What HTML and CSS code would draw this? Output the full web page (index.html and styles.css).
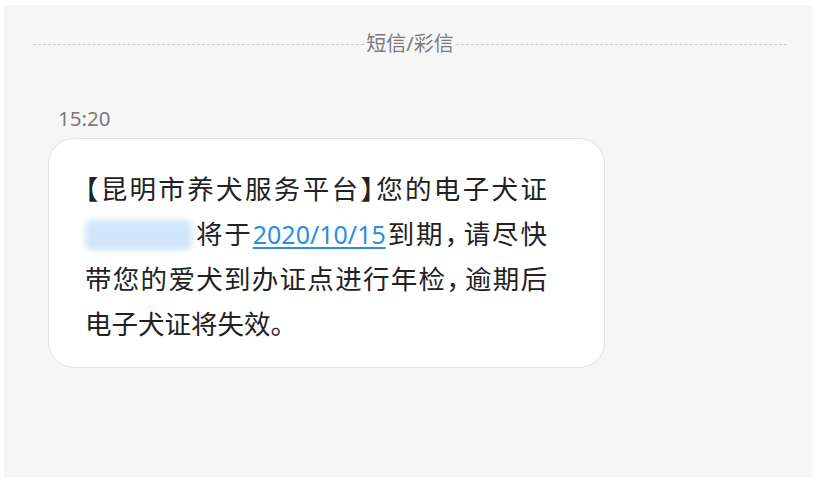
FILE: index.html
```html
<!DOCTYPE html>
<html lang="zh-CN">
<head>
    <meta charset="UTF-8">
    <title>短信/彩信</title>
    <link rel="stylesheet" href="styles.css">
</head>
<body>
    <div class="panel">
        <div class="divider">
            <span class="line"></span>
            <span class="divider-text">短信/彩信</span>
            <span class="line"></span>
        </div>
        <div class="time">15:20</div>
        <div class="bubble">
            <p class="msg">
                <span class="row"><span class="punct">【</span>昆明市养犬服务平台<span class="punct">】</span>您的电子犬证</span>
                <span class="row"><span class="blur"></span>将于<a href="#">2020/10/15</a>到期<span class="punct comma">，</span>请尽快</span>
                <span class="row">带您的爱犬到办证点进行年检<span class="punct comma">，</span>逾期后</span>
                <span class="row last">电子犬证将失效。</span>
            </p>
        </div>
    </div>
</body>
</html>
```

FILE: styles.css
```css
body { margin: 0; padding: 5px 17px 11px 4px; background: #fff; font-family: "Noto Sans", "Noto Sans CJK SC", sans-serif; }
.panel { height: 472px; background: #f7f6f7; padding: 0 26px 0 29px; box-sizing: border-box; overflow: hidden; }

/* divider with label */
.divider { display: flex; align-items: center; padding-top: 25px; height: 28px; }
.divider .line { flex: 1; border-top: 1px dashed #c8c8c8; }
.divider-text { font-size: 20px; line-height: 28px; color: #7a7a7a; padding: 0 2px; }

.time { font-size: 20.5px; color: #7a7a7a; line-height: 26px; margin: 47px 0 0 25px; }

/* message bubble */
.bubble { width: 557px; box-sizing: border-box; margin: 7px 0 0 15px; background: #fff; border: 1px solid #e2e2e2; border-radius: 26px; padding: 26px 57px 22px 36px; }
.msg { margin: 0; font-size: 26.5px; line-height: 45px; color: #222; font-family: "Noto Sans CJK SC", sans-serif; }
.row { display: block; height: 45px; text-align: justify; text-align-last: justify; white-space: nowrap; }
.row.last { text-align-last: left; }
.punct { font-feature-settings: "halt"; }
.comma { padding-right: 4px; }
.msg a { font-family: "Noto Sans", "Noto Sans CJK SC", sans-serif; font-size: 25px; color: #2b8fe0; text-decoration: underline; text-underline-offset: 3px; }
.blur { display: inline-block; vertical-align: -6px; width: 107px; height: 30px; margin-right: 2px; background: #cfe6fb; border-radius: 6px; filter: blur(3px); }
```
